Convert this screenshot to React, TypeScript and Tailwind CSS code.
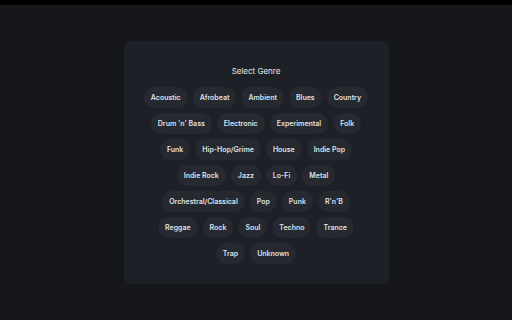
const rows: string[][] = [
  ["Acoustic", "Afrobeat", "Ambient", "Blues", "Country"],
  ["Drum 'n' Bass", "Electronic", "Experimental", "Folk"],
  ["Funk", "Hip-Hop/Grime", "House", "Indie Pop"],
  ["Indie Rock", "Jazz", "Lo-Fi", "Metal"],
  ["Orchestral/Classical", "Pop", "Punk", "R'n'B"],
  ["Reggae", "Rock", "Soul", "Techno", "Trance"],
  ["Trap", "Unknown"],
];

const GenreChip = ({ label }: { label: string }) => (
  <button className="h-[21px] px-[7px] rounded-full bg-[#262930] text-[7px] font-semibold text-[#dfe1e5] leading-none">
    {label}
  </button>
);

const App = () => {
  return (
    <div className="w-[512px] h-[320px] flex flex-col bg-[#15171b] font-['Inter',sans-serif]">
      <div className="h-[5px] bg-black shrink-0" />
      <div className="flex-1 flex items-center justify-center">
        <div className="w-[265px] rounded-[8px] bg-[#1d2027] pt-[25px] pb-[20px] flex flex-col items-center">
          <h2 className="text-[8px] leading-[11px] text-[#e4e5e8] mb-[10px]">Select Genre</h2>
          <div className="flex flex-col gap-[5px]">
            {rows.map((row, i) => (
              <div key={i} className="flex justify-center gap-[5px]">
                {row.map(g => (
                  <GenreChip key={g} label={g} />
                ))}
              </div>
            ))}
          </div>
        </div>
      </div>
    </div>
  );
};

export default App;
